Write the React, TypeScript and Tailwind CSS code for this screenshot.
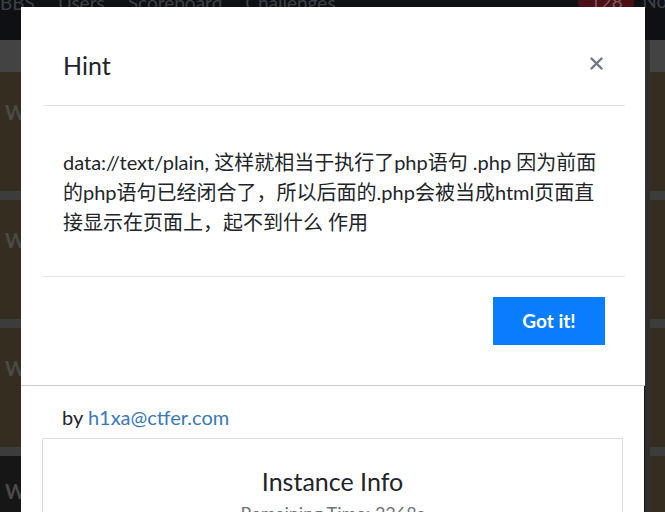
import React from 'react';

const navLinks = ['BBS', 'Users', 'Scoreboard', 'Challenges'];

// Challenge tiles peeking out on both sides of the dialogs
function TileColumn({ tiles, labels }: { tiles: string[]; labels: boolean }) {
  return (
    <div className="flex flex-col">
      <div className="h-[32px] bg-[#434343]" />
      {tiles.map((color, i) => (
        <div key={i} className={`flex flex-col ${i > 0 ? 'pt-[9px] bg-[#3c3c3c]' : ''}`}>
          <div className={`h-[119px] ${color} flex items-center pl-[5px]`}>
            {labels && (
              <span className="text-[20px] font-bold text-[#4a4a4a] -mt-[40px]">We</span>
            )}
          </div>
        </div>
      ))}
    </div>
  );
}

export default function App() {
  return (
    <div
      className="relative w-[665px] h-[512px] overflow-hidden bg-[#131313]"
      style={{ fontFamily: 'Lato, "Noto Sans CJK SC", sans-serif' }}
    >
      {/* navbar behind the backdrop */}
      <div className="h-[40px] bg-[#0f1013] flex items-start justify-between overflow-hidden">
        <div className="flex gap-[23px] -mt-[11px] text-[19px] text-[#3e4146]">
          {navLinks.map((link) => (
            <span key={link}>{link}</span>
          ))}
        </div>
        <div className="flex items-start gap-[8px] -mt-[11px] mr-[-9px]">
          <span className="w-[56px] text-center rounded-full bg-[#4a1016] text-[#7b5a5c] text-[19px] leading-[26px]">
            128
          </span>
          <span className="text-[19px] text-[#3e4146] leading-[24px]">Not</span>
        </div>
      </div>

      {/* challenge board */}
      <div className="flex justify-between">
        <div className="w-[21px] overflow-hidden">
          <TileColumn tiles={['bg-[#352d1f]', 'bg-[#352d1f]', 'bg-[#352d1f]']} labels />
          <div className="h-[9px] bg-[#3c3c3c]" />
          <div className="h-[60px] bg-[#161616] pl-[5px] pt-[20px]">
            <span className="text-[20px] font-bold text-[#4a4a4a]">We</span>
          </div>
        </div>
        <div className="w-[20px] flex">
          <div className="w-[5px] bg-[#2f2f2f]" />
          <div className="flex-1">
            <TileColumn tiles={['bg-[#352d1f]', 'bg-[#352d1f]', 'bg-[#352d1f]', 'bg-[#352d1f]']} labels={false} />
          </div>
        </div>
      </div>

      {/* challenge dialog underneath */}
      <div className="absolute left-[21px] top-[200px] w-[623px] h-[400px] bg-white">
        <div className="pt-[202px] px-[21px]">
          <p className="px-[20px] text-[20px] leading-[30px] text-[#212529]">
            by <span className="text-[#3a7ab8]">h1xa@ctfer.com</span>
          </p>
          <div className="mt-[6px] border border-[#dddddd] pt-[24px] flex flex-col items-center">
            <h3 className="text-[25px] leading-[36px] text-[#212529]">Instance Info</h3>
            <p className="text-[18px] leading-[28px] text-[#6c757d]">Remaining Time: 2268s</p>
          </div>
        </div>
      </div>

      {/* hint dialog */}
      <div className="absolute left-[21px] top-[7px] w-[624px] h-[379px] bg-white border-b border-[#cccccc] pl-[22px] pr-[20px]">
        <div className="flex items-center justify-between pt-[40px] pb-[22px] px-[20px] border-b border-[#e3e3e3]">
          <h5 className="text-[25px] leading-[36px] text-[#212529]">Hint</h5>
          <svg width="13" height="13" viewBox="0 0 13 13" className="mr-[2px] -mt-[3px]">
            <path d="M1.5 1.5 L11.5 11.5 M11.5 1.5 L1.5 11.5" stroke="#6b7787" strokeWidth="2.4" strokeLinecap="round" />
          </svg>
        </div>
        <div className="pt-[41px] pb-[39px] px-[20px]">
          <p className="text-[20px] leading-[30px] text-[#212529] whitespace-nowrap">
            data://text/plain, 这样就相当于执行了php语句 .php 因为前面
            <br />
            的php语句已经闭合了，所以后面的.php会被当成html页面直
            <br />
            接显示在页面上，起不到什么 作用
          </p>
        </div>
        <div className="flex justify-end pt-[20px] px-[20px] border-t border-[#e3e3e3]">
          <button className="w-[112px] h-[48px] bg-[#0a7dff] text-white text-[19px] font-bold">
            Got it!
          </button>
        </div>
      </div>
    </div>
  );
}
